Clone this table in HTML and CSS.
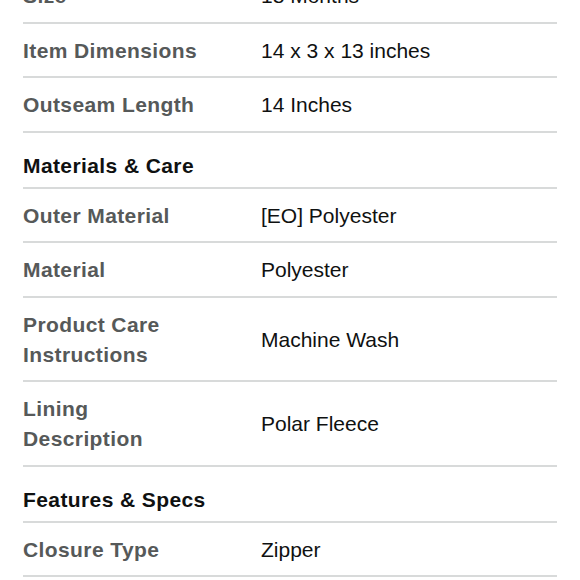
FILE: index.html
```html
<!DOCTYPE html>
<html lang="en">
<head>
<meta charset="utf-8">
<title>Product details</title>
<link rel="stylesheet" href="styles.css">
</head>
<body>
<main class="specs">
  <div class="row"><div class="label">Size</div><div class="value">18 Months</div></div>
  <div class="row"><div class="label">Item Dimensions</div><div class="value">14 x 3 x 13 inches</div></div>
  <div class="row"><div class="label">Outseam Length</div><div class="value">14 Inches</div></div>
  <h3 class="section">Materials &amp; Care</h3>
  <div class="row"><div class="label">Outer Material</div><div class="value">[EO] Polyester</div></div>
  <div class="row"><div class="label">Material</div><div class="value">Polyester</div></div>
  <div class="row"><div class="label">Product Care Instructions</div><div class="value">Machine Wash</div></div>
  <div class="row"><div class="label">Lining Description</div><div class="value">Polar Fleece</div></div>
  <h3 class="section">Features &amp; Specs</h3>
  <div class="row"><div class="label">Closure Type</div><div class="value">Zipper</div></div>
</main>
</body>
</html>
```
FILE: styles.css
```css
html, body {
  margin: 0;
  padding: 0;
  background: #ffffff;
}

body {
  font-family: "Liberation Sans", Arial, sans-serif;
  font-size: 21px;
  line-height: 30px;
  color: #0f1111;
  overflow: hidden;
}

.specs {
  margin: -31px 23px 0;
}

.row {
  display: grid;
  grid-template-columns: 182px 1fr;
  column-gap: 56px;
  align-items: center;
  padding: 12.25px 0 10.25px;
  border-bottom: 2px solid #d8dada;
}

.label {
  font-weight: 700;
  color: #565959;
  letter-spacing: 0.4px;
}

.value {
  color: #0f1111;
}

.section {
  margin: 0;
  padding: 18px 0 6px;
  font-size: 21px;
  line-height: 30px;
  font-weight: 700;
  color: #0f1111;
  letter-spacing: 0.4px;
  border-bottom: 2px solid #d8dada;
}
```
